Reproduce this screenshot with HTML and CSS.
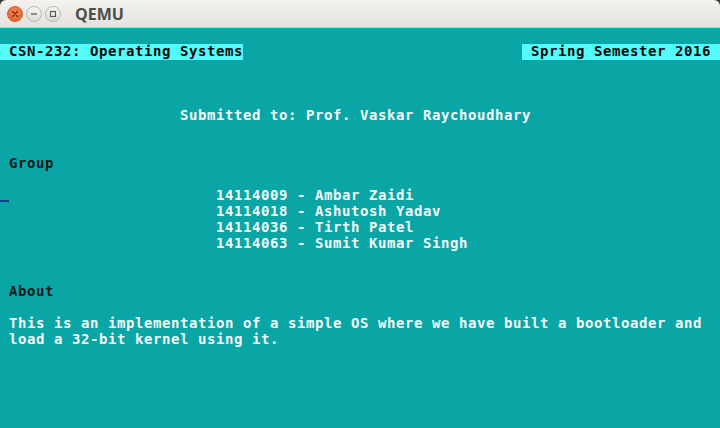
FILE: index.html
```html
<!DOCTYPE html>
<html>
<head>
<meta charset="utf-8">
<link rel="stylesheet" href="styles.css">
</head>
<body>
<div class="window">
  <div class="titlebar">
    <div class="buttons">
      <span class="btn close"><svg width="8" height="8" viewBox="0 0 8 8"><path d="M1.5 1.5 L6.5 6.5 M6.5 1.5 L1.5 6.5" stroke="#7a2a0e" stroke-width="1.4" stroke-linecap="round"/></svg></span>
      <span class="btn"><svg width="8" height="8" viewBox="0 0 8 8"><path d="M1 4 H7" stroke="#5a5954" stroke-width="1.3"/></svg></span>
      <span class="btn"><svg width="8" height="8" viewBox="0 0 8 8"><rect x="1.5" y="1.5" width="5" height="5" fill="none" stroke="#5a5954" stroke-width="1.1"/></svg></span>
    </div>
    <span class="title">QEMU</span>
  </div>
  <div class="screen">
    <div class="row"></div>
    <div class="row split"><span class="hl"> CSN-232: Operating Systems</span><span class="hl"> Spring Semester 2016 </span></div>
    <div class="row"></div>
    <div class="row"></div>
    <div class="row"></div>
    <div class="row">                    Submitted to: Prof. Vaskar Raychoudhary</div>
    <div class="row"></div>
    <div class="row"></div>
    <div class="row dark"> Group</div>
    <div class="row"></div>
    <div class="row cursor-row">                        14114009 - Ambar Zaidi<span class="cursor"></span></div>
    <div class="row">                        14114018 - Ashutosh Yadav</div>
    <div class="row">                        14114036 - Tirth Patel</div>
    <div class="row">                        14114063 - Sumit Kumar Singh</div>
    <div class="row"></div>
    <div class="row"></div>
    <div class="row dark"> About</div>
    <div class="row"></div>
    <div class="row"> This is an implementation of a simple OS where we have built a bootloader and</div>
    <div class="row"> load a 32-bit kernel using it.</div>
    <div class="row"></div>
    <div class="row"></div>
    <div class="row"></div>
    <div class="row"></div>
    <div class="row"></div>
  </div>
</div>
</body>
</html>
```

FILE: styles.css
```css
* { box-sizing: border-box; }
html, body {
  margin: 0;
  padding: 0;
  background: #3c3b37;
  width: 720px;
  height: 428px;
  overflow: hidden;
}
.window {
  width: 720px;
  display: flex;
  flex-direction: column;
}
.titlebar {
  height: 28px;
  display: flex;
  align-items: center;
  background: linear-gradient(#f3f2f0, #e4e2de);
  border-radius: 6px 6px 0 0;
  border-bottom: 1px solid #c9c7c2;
  padding-left: 7px;
}
.buttons {
  display: flex;
  gap: 3px;
  align-items: center;
}
.btn {
  width: 16px;
  height: 16px;
  border-radius: 50%;
  display: flex;
  align-items: center;
  justify-content: center;
  background: linear-gradient(#f6f5f3, #dddbd7);
  border: 1px solid #b9b7b2;
}
.btn.close {
  background: radial-gradient(circle at 50% 40%, #f58a5a, #e45a26);
  border-color: #d4581f;
}
.title {
  margin-left: 14px;
  font-family: "Open Sans", "DejaVu Sans", sans-serif;
  font-weight: 700;
  font-size: 16px;
  color: #4f4e4a;
  line-height: 1;
}
.screen {
  background: #0aa6a6;
  height: 400px;
  display: flex;
  flex-direction: column;
  font-family: "DejaVu Sans Mono", monospace;
  font-weight: 700;
  font-size: 14px;
  letter-spacing: 0.572px;
  color: #f4f8f8;
}
.row {
  height: 16px;
  line-height: 14px;
  white-space: pre;
  position: relative;
}
.split {
  display: flex;
  justify-content: space-between;
}
.hl {
  background: #55fbfb;
  color: #0a0a0a;
  white-space: pre;
  height: 16px;
}
.dark { color: #0c1a1a; }
.cursor {
  position: absolute;
  left: 0;
  top: 12px;
  width: 9px;
  height: 2px;
  background: #1e3c8c;
}
```
